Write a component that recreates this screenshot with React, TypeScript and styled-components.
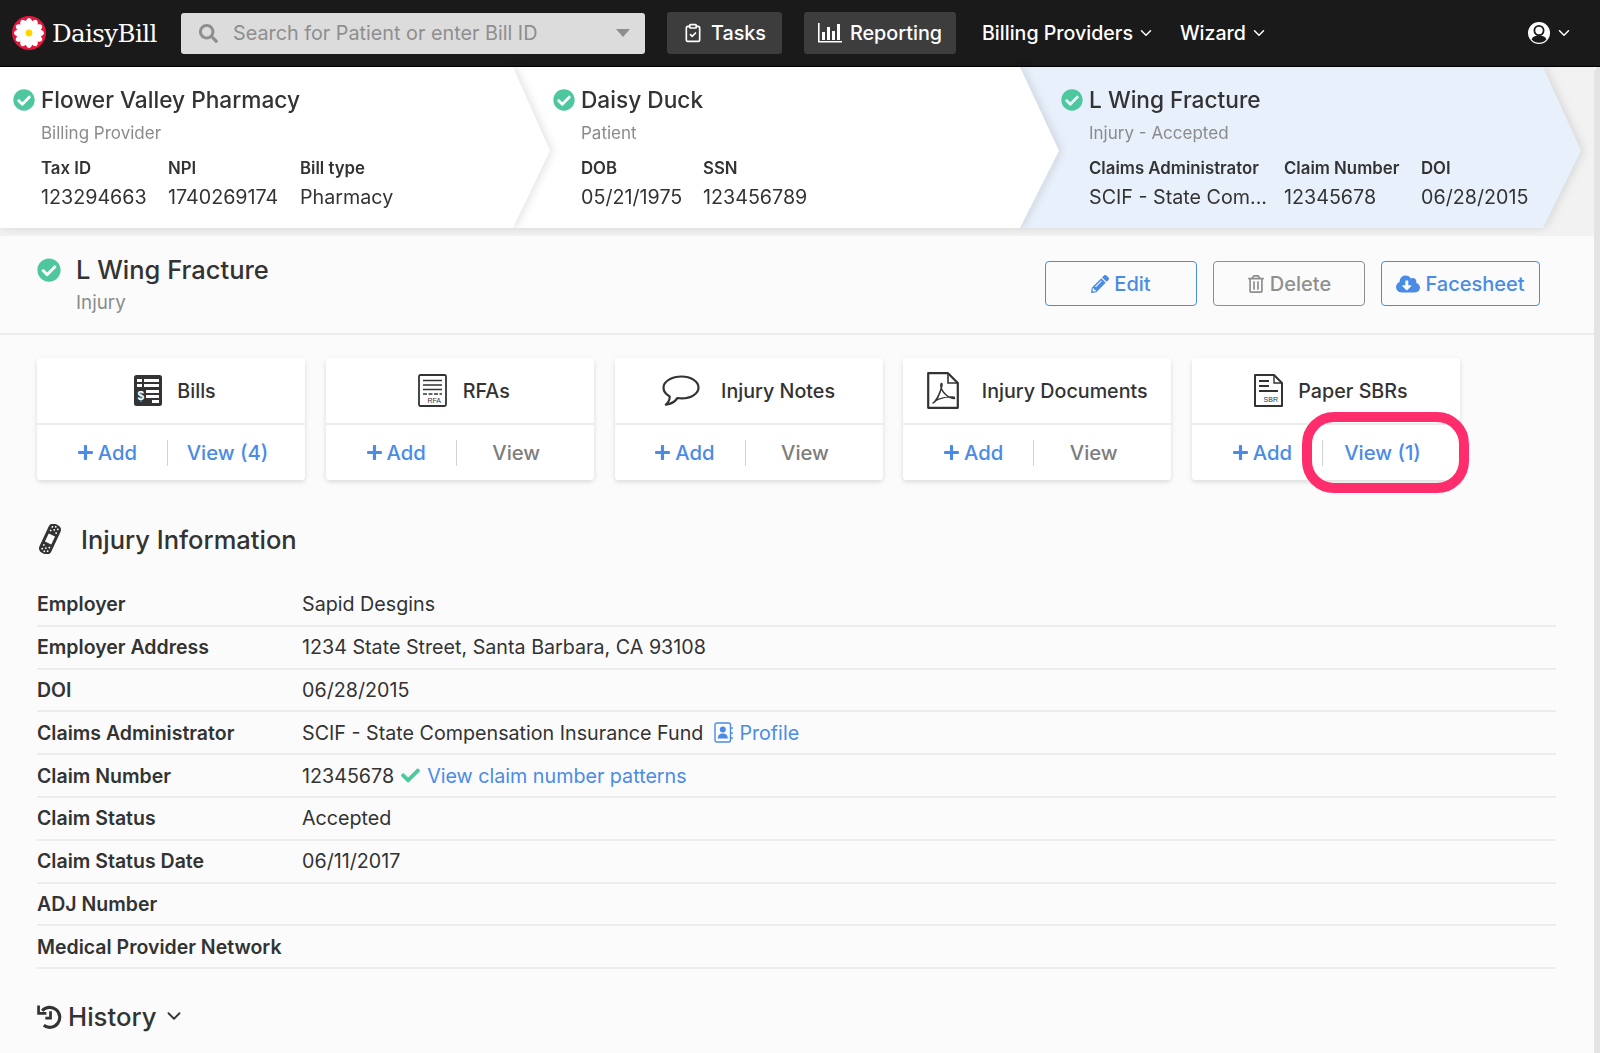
import styled, { createGlobalStyle } from 'styled-components';
import { FaCheckCircle, FaCheck, FaPlus, FaPencilAlt, FaRegTrashAlt, FaCloudDownloadAlt, FaSearch } from 'react-icons/fa';
import { ChevronDown, ClipboardCheck } from 'lucide-react';

const GlobalStyle = createGlobalStyle`
  html, body {
    margin: 0;
    padding: 0;
    height: 100%;
    overflow: hidden;
    background: #fbfbfb;
    font-family: Inter, Lato, sans-serif;
    color: #333;
  }
  * { box-sizing: border-box; }
`;

const TopBar = styled.header`
  height: 67px;
  background: #1a1a1a;
  display: flex;
  align-items: center;
  padding: 0 27px 0 12px;
  color: #fff;
  border-bottom: 1px solid #000;
`;

const Brand = styled.div`
  display: flex;
  align-items: center;
  gap: 6px;
  width: 169px;
  font-family: "DejaVu Serif", serif;
  font-size: 24.5px;
  letter-spacing: -0.6px;
`;

const SearchBox = styled.div`
  width: 464px;
  height: 41px;
  background: #dcdcdc;
  border-radius: 3px;
  display: flex;
  align-items: center;
  padding: 0 15px 0 18px;
  color: #8e8e8e;
  font-size: 19.8px;
  gap: 15px;
`;

const Caret = styled.span`
  margin-left: auto;
  width: 0;
  height: 0;
  border-left: 7px solid transparent;
  border-right: 7px solid transparent;
  border-top: 8px solid #8e8e8e;
`;

const NavButton = styled.div<{ $width: number; $left: number }>`
  width: ${p => p.$width}px;
  margin-left: ${p => p.$left}px;
  height: 42px;
  background: #3d3d3d;
  border-radius: 3px;
  display: flex;
  align-items: center;
  justify-content: center;
  gap: 8px;
  font-size: 19.8px;
  font-weight: 500;
`;

const NavLink = styled.div<{ $left: number }>`
  margin-left: ${p => p.$left}px;
  display: flex;
  align-items: center;
  gap: 4px;
  font-size: 19.6px;
  font-weight: 500;
`;

const UserMenu = styled.div`
  margin-left: auto;
  display: flex;
  align-items: center;
  gap: 5px;
`;

const Body = styled.div`
  display: flex;
  align-items: stretch;
`;

const Main = styled.main`
  flex: 1;
  min-width: 0;
`;

const ScrollTrack = styled.div`
  width: 6px;
  height: 986px;
  background: #e4e4e4;
  border-top-left-radius: 5px;
`;

const Band = styled.div`
  display: flex;
  height: 169px;
  padding-bottom: 8px;
  background: #f2f2f2;
`;

const Crumb = styled.section<{ $width: number; $overlap: number; $pad: number; $layer: number; $tint: string; $notch: number }>`
  position: relative;
  z-index: ${p => p.$layer};
  flex: none;
  width: ${p => p.$width}px;
  margin-left: ${p => -p.$overlap}px;
  padding: 19px 0 0 ${p => p.$pad}px;
  filter: drop-shadow(2px 0 5px rgba(0, 0, 0, 0.12));

  &::before {
    content: '';
    position: absolute;
    inset: 0;
    z-index: -1;
    background: ${p => p.$tint};
    clip-path: polygon(0 0, calc(100% - ${p => p.$notch}px) 0, 100% 52%, calc(100% - ${p => p.$notch}px) 100%, 0 100%);
  }
`;

const CrumbTitle = styled.div`
  display: flex;
  align-items: center;
  gap: 6px;
  font-size: 22.7px;
  font-weight: 500;
  line-height: 28px;
  color: #333;
  svg { color: #4fc79e; flex: none; }
`;

const CrumbSub = styled.div`
  margin: 7px 0 0 28px;
  font-size: 17px;
  line-height: 24px;
  color: #8b8b8b;
`;

const Fields = styled.div<{ $columns: string }>`
  display: grid;
  grid-template-columns: ${p => p.$columns};
  margin: 11px 0 0 28px;
  font-size: 19.7px;
`;

const FieldLabel = styled.div`
  font-size: 16.8px;
  font-weight: 600;
  line-height: 24px;
  color: #333;
`;

const FieldValue = styled.div`
  margin-top: 4px;
  line-height: 26px;
  white-space: nowrap;
  color: #333;
`;

const PageHead = styled.div`
  height: 99px;
  display: flex;
  justify-content: space-between;
  padding: 21px 54px 0 37px;
  border-bottom: 2px solid #ececec;
`;

const HeadTitle = styled.h1`
  margin: 0;
  display: flex;
  align-items: center;
  gap: 15px;
  font-size: 25.5px;
  font-weight: 500;
  line-height: 26px;
  color: #333;
  svg { color: #4fc79e; }
`;

const HeadSub = styled.div`
  margin: 7px 0 0 39px;
  font-size: 18.8px;
  line-height: 26px;
  color: #8b8b8b;
`;

const HeadActions = styled.div`
  display: flex;
  gap: 16px;
  padding-top: 4px;
`;

const ActionButton = styled.div<{ $width: number; $muted?: boolean }>`
  width: ${p => p.$width}px;
  height: 45px;
  border: 1.5px solid ${p => (p.$muted ? '#8f8f8f' : '#4a8be6')};
  color: ${p => (p.$muted ? '#8f8f8f' : '#4a8be6')};
  border-radius: 4px;
  display: flex;
  align-items: center;
  justify-content: center;
  gap: 5px;
  font-size: 20px;
  font-weight: 500;
`;

const CardRow = styled.div`
  display: flex;
  gap: 20.75px;
  padding: 23px 0 0 37px;
`;

const Card = styled.article`
  position: relative;
  width: 268px;
  height: 122px;
  background: #fff;
  border-radius: 3px;
  box-shadow: 0 2px 5px rgba(0, 0, 0, 0.13);
`;

const CardHead = styled.div<{ $gap: number; $shift: number }>`
  height: 67px;
  display: flex;
  align-items: center;
  justify-content: center;
  gap: ${p => p.$gap}px;
  padding-left: ${p => p.$shift}px;
  font-size: 19.7px;
  font-weight: 500;
  border-bottom: 2px solid #ececec;
  color: #333;
`;

const CardFoot = styled.div`
  height: 55px;
  display: grid;
  grid-template-columns: 130px 1fr;
  align-items: center;
  font-size: 20.3px;
  font-weight: 500;
`;

const AddLink = styled.div`
  display: flex;
  align-items: center;
  justify-content: center;
  gap: 4px;
  padding-left: 10px;
  color: #4a8be6;
`;

const ViewLink = styled.div<{ $active?: boolean }>`
  height: 26px;
  line-height: 26px;
  text-align: center;
  padding-right: 18px;
  border-left: 1px solid #d2d2d2;
  color: ${p => (p.$active ? '#4a8be6' : '#7d7d7d')};
`;

const Highlight = styled.div`
  position: absolute;
  left: 110px;
  top: 54px;
  width: 167px;
  height: 81px;
  border: 10px solid #ff2d6c;
  border-radius: 32px;
`;

const SectionTitle = styled.h2`
  margin: 34px 0 0 37px;
  height: 50px;
  display: flex;
  align-items: center;
  gap: 18px;
  font-size: 25.5px;
  font-weight: 500;
  color: #333;
`;

const InfoList = styled.div`
  margin: 20px 38px 0 37px;
`;

const InfoRow = styled.div`
  height: 42.8px;
  display: grid;
  grid-template-columns: 265px 1fr;
  align-items: center;
  font-size: 19.7px;
  border-bottom: 2px solid #ececec;
`;

const InfoLabel = styled.div`
  font-weight: 600;
  font-size: 19.5px;
  color: #333;
`;

const InfoValue = styled.div`
  display: flex;
  align-items: center;
  gap: 7px;
  color: #333;
  svg { flex: none; }
`;

const BlueLink = styled.span<{ $left?: number }>`
  display: inline-flex;
  align-items: center;
  gap: 6px;
  margin-left: ${p => p.$left ?? 0}px;
  color: #4a8be6;
`;

const HistoryToggle = styled.div`
  margin: 29px 0 0 37px;
  height: 36px;
  display: flex;
  align-items: center;
  gap: 6px;
  font-size: 25.7px;
  font-weight: 500;
  color: #333;
`;

const LogoMark = () => (
  <svg width="34" height="34" viewBox="0 0 34 34">
    <circle cx="17" cy="17" r="17" fill="#e3173e" />
    {Array.from({ length: 12 }, (_, i) => (
      <ellipse key={i} cx="17" cy="9" rx="3.8" ry="7" fill="#fff" transform={`rotate(${i * 30} 17 17)`} />
    ))}
    <circle cx="17" cy="17" r="3.4" fill="#ffd500" />
  </svg>
);

const UserIcon = () => (
  <svg width="22" height="22" viewBox="0 0 22 22">
    <circle cx="11" cy="11" r="11" fill="#fff" />
    <circle cx="11" cy="8.5" r="4.6" fill="none" stroke="#1a1a1a" strokeWidth="1.8" />
    <path d="M3.6 17.6C4.6 14.6 7 13.6 11 13.6S17.4 14.6 18.4 17.6A10 10 0 0 1 3.6 17.6Z" fill="#1a1a1a" />
  </svg>
);

const ChartIcon = () => (
  <svg width="24" height="20" viewBox="0 0 24 20" fill="#fff">
    <path d="M0 0h1.6v18H24v1.6H0z" />
    <rect x="4" y="9" width="3" height="8" />
    <rect x="9" y="4" width="3" height="13" />
    <rect x="14" y="8" width="3" height="9" />
    <rect x="19" y="1" width="3" height="16" />
  </svg>
);

const BillsIcon = () => (
  <svg width="28" height="31" viewBox="0 0 28 31">
    <rect width="28" height="31" rx="2.5" fill="#333" />
    <g fill="#fff">
      <rect x="3" y="4" width="5" height="3" />
      <rect x="10" y="4" width="15" height="3" />
      <rect x="3" y="9" width="5" height="3" />
      <rect x="10" y="9" width="15" height="3" />
      <rect x="12" y="15" width="13" height="3" />
      <rect x="12" y="20" width="13" height="3" />
      <rect x="18" y="25" width="7" height="3" />
    </g>
    <text x="3.5" y="25" fontSize="12" fontWeight="700" fill="#fff" fontFamily="Liberation Sans, sans-serif">$</text>
  </svg>
);

const RfaIcon = () => (
  <svg width="29" height="33" viewBox="0 0 29 33" fill="none" stroke="#333">
    <rect x="1" y="1" width="27" height="31" rx="1.5" strokeWidth="1.8" />
    <path d="M5 6.5h19M5 11h19M5 15.5h19" strokeWidth="1.6" />
    <path d="M5 20h19" strokeWidth="1.6" strokeDasharray="4 1.5" />
    <text x="23" y="29" textAnchor="end" fontSize="7" fill="#333" stroke="none" fontFamily="Liberation Sans, sans-serif">RFA</text>
  </svg>
);

const BubbleIcon = () => (
  <svg width="38" height="31" viewBox="0 0 38 31" fill="none" stroke="#333" strokeWidth="2.2" strokeLinejoin="round">
    <path d="M19.5 1.5C28.6 1.5 36.5 6.2 36.5 12.6C36.5 19 28.8 23.4 19.8 23.4C18.2 23.4 16.8 23.3 15.5 23C13.4 26 9.6 29 3.8 29.6C6.3 27.6 7.8 24.9 7.7 21.4C3.9 19.5 1.5 16.4 1.5 12.6C1.5 6.2 10.3 1.5 19.5 1.5Z" />
  </svg>
);

const PdfIcon = () => (
  <svg width="32" height="37" viewBox="0 0 32 37" fill="none" stroke="#333">
    <path d="M1.2 1.2H21L30.8 11V35.8H1.2Z" strokeWidth="2.2" strokeLinejoin="round" />
    <path d="M21 1.2V11H30.8" strokeWidth="1.6" />
    <path d="M5.5 31.5C9 29.5 13 22 15 13.5C15.5 11 14 10.5 13.8 13C13.5 18 19.5 25.5 26.5 26.5C28 26.7 28 25 26 25C20 24.5 12 26.5 7.5 29.5" strokeWidth="1.4" />
  </svg>
);

const SbrIcon = () => (
  <svg width="29" height="33" viewBox="0 0 29 33" fill="none" stroke="#333">
    <path d="M1 1H20L28 9V32H1Z" strokeWidth="2" strokeLinejoin="round" />
    <path d="M20 1V9H28" strokeWidth="1.4" />
    <path d="M5 7H15M5 12H15M5 17H24" strokeWidth="1.8" />
    <text x="24" y="28" textAnchor="end" fontSize="7" fill="#333" stroke="none" fontFamily="Liberation Sans, sans-serif">SBR</text>
  </svg>
);

const BandAidIcon = () => (
  <svg width="26" height="30" viewBox="0 0 26 30">
    <g transform="rotate(25 13 15)">
      <rect x="6.5" y="-1" width="13" height="32" rx="5" fill="#333" />
      <rect x="9.5" y="10.5" width="7" height="9" fill="#fff" />
      {[[10, 3], [13, 1.5], [16, 3], [13, 5], [10, 7], [16, 7], [10, 23], [16, 23], [13, 25], [10, 27], [16, 27], [13, 28.5]].map(([x, y]) => (
        <circle key={`${x}-${y}`} cx={x} cy={y} r="0.9" fill="#fff" />
      ))}
    </g>
  </svg>
);

const ContactIcon = () => (
  <svg width="19" height="21" viewBox="0 0 19 21" fill="none" stroke="#4a8be6">
    <rect x="1" y="1" width="15.5" height="19" rx="2" strokeWidth="1.4" />
    <path d="M18 5v2M18 10v2M18 15v2" strokeWidth="1.4" />
    <circle cx="8.8" cy="7.5" r="3" fill="#4a8be6" stroke="none" />
    <path d="M3.8 16.5c0-3.6 2-5 5-5s5 1.4 5 5z" fill="#4a8be6" stroke="none" />
  </svg>
);

const HistoryIcon = () => (
  <svg width="25" height="25" viewBox="0 0 24 24" fill="none" stroke="#333" strokeWidth="3">
    <path d="M5 6.5A9.6 9.6 0 1 1 6.5 20.5" />
    <path d="M1.5 1.5V9H9" strokeWidth="2.6" />
    <path d="M13 7v6.5H8" strokeWidth="2.6" />
  </svg>
);

const infoRows: [string, React.ReactNode][] = [
  ['Employer', 'Sapid Desgins'],
  ['Employer Address', '1234 State Street, Santa Barbara, CA 93108'],
  ['DOI', '06/28/2015'],
  ['Claims Administrator', <>SCIF - State Compensation Insurance Fund <BlueLink $left={4}><ContactIcon />Profile</BlueLink></>],
  ['Claim Number', <>12345678 <FaCheck size={19} color="#4fc79e" /><BlueLink>View claim number patterns</BlueLink></>],
  ['Claim Status', 'Accepted'],
  ['Claim Status Date', '06/11/2017'],
  ['ADJ Number', ''],
  ['Medical Provider Network', ''],
];

const cards = [
  { name: 'Bills', icon: <BillsIcon />, gap: 15, shift: 8, view: 'View (4)', active: true },
  { name: 'RFAs', icon: <RfaIcon />, gap: 16, shift: 8, view: 'View', active: false },
  { name: 'Injury Notes', icon: <BubbleIcon />, gap: 21, shift: 0, view: 'View', active: false },
  { name: 'Injury Documents', icon: <PdfIcon />, gap: 23, shift: 0, view: 'View', active: false },
  { name: 'Paper SBRs', icon: <SbrIcon />, gap: 15, shift: 10, view: 'View (1)', active: true },
];

export default function App() {
  return (
    <>
      <GlobalStyle />
      <TopBar>
        <Brand><LogoMark />DaisyBill</Brand>
        <SearchBox>
          <FaSearch size={19} />
          Search for Patient or enter Bill ID
          <Caret />
        </SearchBox>
        <NavButton $width={115} $left={22}><ClipboardCheck size={20} />Tasks</NavButton>
        <NavButton $width={152} $left={22}><ChartIcon />Reporting</NavButton>
        <NavLink $left={26}>Billing Providers <ChevronDown size={18} /></NavLink>
        <NavLink $left={25}>Wizard <ChevronDown size={18} /></NavLink>
        <UserMenu><UserIcon /><ChevronDown size={18} /></UserMenu>
      </TopBar>
      <Body>
        <Main>
          <Band>
            <Crumb $width={550} $overlap={0} $pad={13} $layer={3} $tint="#fff" $notch={37}>
              <CrumbTitle><FaCheckCircle size={22} />Flower Valley Pharmacy</CrumbTitle>
              <CrumbSub>Billing Provider</CrumbSub>
              <Fields $columns="127px 132px auto">
                <div><FieldLabel>Tax ID</FieldLabel><FieldValue>123294663</FieldValue></div>
                <div><FieldLabel>NPI</FieldLabel><FieldValue>1740269174</FieldValue></div>
                <div><FieldLabel>Bill type</FieldLabel><FieldValue>Pharmacy</FieldValue></div>
              </Fields>
            </Crumb>
            <Crumb $width={546} $overlap={37} $pad={40} $layer={2} $tint="#fff" $notch={39}>
              <CrumbTitle><FaCheckCircle size={22} />Daisy Duck</CrumbTitle>
              <CrumbSub>Patient</CrumbSub>
              <Fields $columns="122px auto">
                <div><FieldLabel>DOB</FieldLabel><FieldValue>05/21/1975</FieldValue></div>
                <div><FieldLabel>SSN</FieldLabel><FieldValue>123456789</FieldValue></div>
              </Fields>
            </Crumb>
            <Crumb $width={561} $overlap={39} $pad={41} $layer={1} $tint="#e8f0fb" $notch={38}>
              <CrumbTitle><FaCheckCircle size={22} />L Wing Fracture</CrumbTitle>
              <CrumbSub>Injury - Accepted</CrumbSub>
              <Fields $columns="195px 137px auto">
                <div><FieldLabel>Claims Administrator</FieldLabel><FieldValue>SCIF - State Com...</FieldValue></div>
                <div><FieldLabel>Claim Number</FieldLabel><FieldValue>12345678</FieldValue></div>
                <div><FieldLabel>DOI</FieldLabel><FieldValue>06/28/2015</FieldValue></div>
              </Fields>
            </Crumb>
          </Band>
          <PageHead>
            <div>
              <HeadTitle><FaCheckCircle size={24} />L Wing Fracture</HeadTitle>
              <HeadSub>Injury</HeadSub>
            </div>
            <HeadActions>
              <ActionButton $width={152}><FaPencilAlt size={18} />Edit</ActionButton>
              <ActionButton $width={152} $muted><FaRegTrashAlt size={18} />Delete</ActionButton>
              <ActionButton $width={159}><FaCloudDownloadAlt size={24} />Facesheet</ActionButton>
            </HeadActions>
          </PageHead>
          <CardRow>
            {cards.map(card => (
              <Card key={card.name}>
                <CardHead $gap={card.gap} $shift={card.shift}>{card.icon}{card.name}</CardHead>
                <CardFoot>
                  <AddLink><FaPlus size={17} />Add</AddLink>
                  <ViewLink $active={card.active}>{card.view}</ViewLink>
                </CardFoot>
                {card.name === 'Paper SBRs' && <Highlight />}
              </Card>
            ))}
          </CardRow>
          <SectionTitle><BandAidIcon />Injury Information</SectionTitle>
          <InfoList>
            {infoRows.map(([label, value]) => (
              <InfoRow key={label}>
                <InfoLabel>{label}</InfoLabel>
                <InfoValue>{value}</InfoValue>
              </InfoRow>
            ))}
          </InfoList>
          <HistoryToggle><HistoryIcon />History <ChevronDown size={22} /></HistoryToggle>
        </Main>
        <ScrollTrack />
      </Body>
    </>
  );
}
